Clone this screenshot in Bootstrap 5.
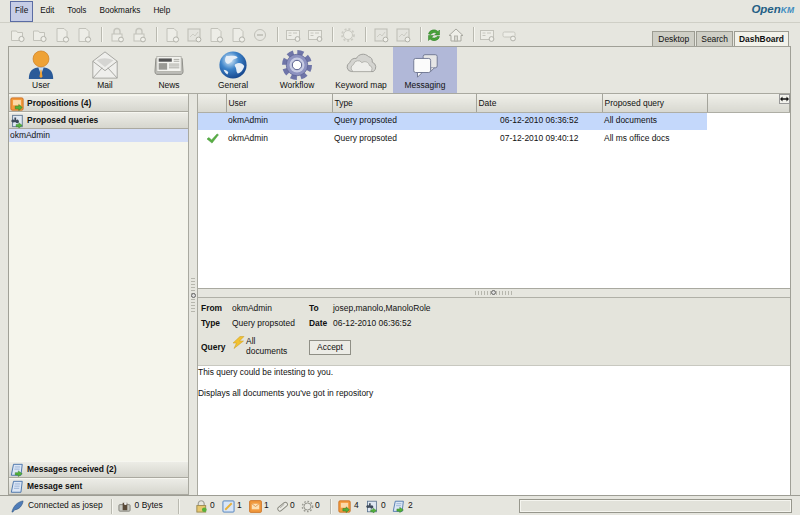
<!DOCTYPE html>
<html lang="en">
<head>
<meta charset="utf-8">
<title>OpenKM</title>
<link rel="stylesheet" href="https://cdn.jsdelivr.net/npm/bootstrap@5.3.0/dist/css/bootstrap.min.css">
<style>
html,body{height:100%;}
body{width:800px;height:515px;overflow:hidden;background:#e6e6df;font-family:"Liberation Sans",Arial,sans-serif;font-size:8.45px;color:#111;line-height:1.1;}
.okm-menu{height:23px;padding:1px 0 0 10px;border-bottom:1px solid #cfcfc6;font-size:8.2px;}
.okm-menu span{padding:0 5px;line-height:19px;margin-right:3px;}
.okm-menu .okm-file{background:#c6cde6;border:1px solid #5a6ca4;padding:0 4px;line-height:18px;margin-right:2px;}
.okm-logo{margin-left:auto;padding-right:6px;font:italic bold 11.5px "Liberation Sans",sans-serif;color:#245f85;line-height:17px;}
.okm-logo i{font-size:8.5px;color:#3d8cc0;font-style:italic;}
.okm-tools{height:23px;padding:0 0 0 10px;}
.okm-tb{width:16px;height:16px;margin-right:6px;flex:none;margin-top:4px;opacity:.85;}
.okm-tb.okm-live{opacity:1;}
.okm-sep{width:1px;height:15px;background:#b9b9b0;margin:4px 7px 0 3px;flex:none;box-shadow:1px 0 #f6f6f0;}
.okm-sep.okm-tight{margin-right:5px;}
.okm-tabs{margin-left:auto;margin-right:11px;gap:1px;align-self:flex-end;}
.okm-tab{padding:0 5px;height:15px;line-height:15px;background:#cfcfc6;border:1px solid #9c9c92;border-bottom:0;}
.okm-tab.okm-mid{padding:0 4px;}
.okm-tab.okm-on{background:#f2f2ea;font-weight:bold;padding:0 4px;}
.okm-main{margin:0 9px 0 8px;border:1px solid #a0a097;border-width:1px 1px 0 1px;flex:1 1 auto;min-height:0;}
.okm-icons{height:47px;border-bottom:1px solid #a9a9a0;}
.okm-ico{width:64px;text-align:center;padding-top:3px;flex:none;}
.okm-ico svg{display:block;margin:0 auto 1px;width:32px;height:30px;}
.okm-ico.okm-on{background:#b1b8d8;}
.okm-body{height:401px;}
.okm-left{width:180px;flex:none;background:#f5f5ec;border-right:1px solid #a9a9a0;padding-top:1px;}
.okm-acc{height:17px;background:linear-gradient(#ecece6,#d6d6ce);border-bottom:1px solid #aaa9a0;border-top:1px solid #f6f6f0;font-weight:bold;display:flex;align-items:center;gap:3px;padding-left:1px;flex:none;}
.okm-acc svg{width:14px;height:14px;flex:none;}
.okm-sel{background:#d3ddf7;height:13px;line-height:13px;padding-left:1px;}
.okm-fill{flex:1 1 auto;}
.okm-vsplit{width:8px;flex:none;display:flex;align-items:center;justify-content:center;}
.okm-dots{width:4px;height:34px;background:repeating-linear-gradient(#b6b6ad 0 1px,transparent 1px 3px);position:relative;}
.okm-knob{width:5px;height:5px;border:1px solid #666;border-radius:50%;background:#ddd;position:absolute;left:0;top:15px;}
.okm-right{flex:1 1 auto;min-width:0;border-left:1px solid #a9a9a0;}
.okm-grid{height:195px;background:#fff;position:relative;overflow:hidden;border-bottom:1px solid #a9a9a0;}
.okm-grid table{table-layout:fixed;width:100%;margin:0;font-size:8.45px;--bs-table-bg:transparent;color:#111;}
.okm-grid th{font-weight:normal;height:18px;padding:1px 0 0 2px;background:linear-gradient(#efefe9,#d8d8d0);border:0;border-right:1px solid #a4a49b;border-bottom:1px solid #aeaea5;vertical-align:middle;}
.okm-grid td{height:17.5px;padding:0 0 0 2px;border:0;vertical-align:middle;}
.okm-grid td.okm-chk{padding:0;text-align:center;line-height:0;}
.okm-grid .okm-cur td{background:#c4d8fb;}
.okm-grid .okm-cur td.okm-none{background:transparent;}
.okm-grid .okm-date{padding-left:24px;}
.okm-fit{position:absolute;right:0;top:0;width:11px;height:10px;background:#f2f2ec;border:1px solid #999;display:flex;align-items:center;justify-content:center;}
.okm-hsplit{height:8px;display:flex;align-items:center;justify-content:center;position:relative;}
.okm-hdots{width:38px;height:4px;background:repeating-linear-gradient(90deg,#b6b6ad 0 1px,transparent 1px 3px);position:relative;}
.okm-hdots .okm-knob{left:16px;top:-1px;}
.okm-detail{height:69px;border-top:1px solid #b0b0a7;border-bottom:1px solid #c8c8c0;background:#e4e4dc;padding:5px 0 0 3px;display:grid;grid-template-columns:31px 77px 24px 1fr;grid-template-rows:15px 16px 26px;align-content:start;}
.okm-detail>div{line-height:11px;}
.okm-detail>.okm-q{display:flex;align-items:flex-start;gap:1px;line-height:10px;padding-top:2px;}
.okm-q svg{width:13px;height:13px;flex:none;}
.okm-rowc{display:flex;align-items:center;}
.okm-span2{grid-column:3 / span 2;}
.okm-accept{font-size:8.45px;line-height:1;padding:0;width:42px;height:15px;border:1px solid #8f8f86;border-radius:0;background:#ecece6;color:#111;}
.okm-msg{background:#fff;flex:1 1 auto;padding:1px 0 0;min-height:0;}
.okm-msg p{margin:0 0 10px;line-height:11px;}
.okm-status{height:20px;padding:1px 0 0 11px;border-top:1px solid #9d9d94;align-items:center;flex:none;}
.okm-status svg{width:13px;height:13px;flex:none;}
.okm-sb{width:1px;height:15px;background:#b9b9b0;flex:none;box-shadow:1px 0 #f6f6f0;}
.okm-sb1{margin:0 6px 0 8px;}
.okm-sb2{margin:0 16px 0 15px;}
.okm-sb3{margin:0 7px 0 9px;}
.okm-prog{width:273px;height:14px;margin:0 8px 0 auto;border:1px solid #97978d;background:#e2e2da;box-shadow:inset 0 0 0 1px #f5f5ef;flex:none;}
.okm-n{width:7px;text-align:center;flex:none;margin:0 6px 0 1px;}
.okm-n2{width:7px;text-align:center;flex:none;margin:0 5px 0 0;}
.okm-n3{width:7px;text-align:center;flex:none;}
.okm-n4{width:7px;text-align:center;flex:none;margin:0 5px 0 2px;}
</style>
</head>
<body class="d-flex flex-column">
<svg width="0" height="0" class="position-absolute">
<defs>
<symbol id="t-doc" viewBox="0 0 16 16"><path d="M3 1.500h7l3 3v10H3z" fill="#efefe9" stroke="#bcbcb4"/><circle cx="12" cy="12.500" r="2.600" fill="#f2f2ec" stroke="#aaaaa2"/></symbol>
<symbol id="t-fold" viewBox="0 0 16 16"><path d="M1.500 4h5l1 1.500h5v8h-11z" fill="#efefe9" stroke="#bcbcb4"/><circle cx="11.500" cy="12" r="2.600" fill="#f2f2ec" stroke="#aaaaa2"/></symbol>
<symbol id="t-lock" viewBox="0 0 16 16"><path d="M5 7V4.500a3 3 0 0 1 6 0V7" fill="none" stroke="#c0c0b8" stroke-width="1.400"/><rect x="3" y="7" width="10" height="7" fill="#efefe9" stroke="#bcbcb4"/><circle cx="12" cy="12.500" r="2.400" fill="#f2f2ec" stroke="#aaaaa2"/></symbol>
<symbol id="t-card" viewBox="0 0 16 16"><rect x="1.500" y="3.500" width="13" height="9" fill="#efefe9" stroke="#bcbcb4"/><path d="M3.500 6h3M3.500 8.500h3M8 6h4" stroke="#c0c0b8"/><circle cx="12.500" cy="12" r="2.400" fill="#f2f2ec" stroke="#aaaaa2"/></symbol>
<symbol id="t-gear" viewBox="0 0 16 16"><circle cx="8" cy="8" r="4.500" fill="#ecece6" stroke="#c4c4bc"/><circle cx="8" cy="8" r="6" fill="none" stroke="#c8c8c0" stroke-width="1.800" stroke-dasharray="2 2"/></symbol>
<symbol id="t-pic" viewBox="0 0 16 16"><rect x="2" y="2" width="12" height="12" fill="#e4e4de" stroke="#b5b5ad"/><path d="M4 10l3-3 2 2 3-4" fill="none" stroke="#c9c9c1"/><circle cx="12.500" cy="12.500" r="2.400" fill="#f2f2ec" stroke="#aaaaa2"/></symbol>
<symbol id="t-round" viewBox="0 0 16 16"><circle cx="8" cy="8" r="5.500" fill="#e8e8e2" stroke="#b8b8b0"/><path d="M5 8h6" stroke="#b0b0a8" stroke-width="1.400"/></symbol>
<symbol id="t-refresh" viewBox="0 0 16 16"><path d="M2.500 7a5.500 5 0 0 1 9.500-2.500L13.500 3v5h-5l2-1.800A3.500 3 0 0 0 5 7.500z" fill="#4aa33a" stroke="#2b7a27" stroke-width=".5"/><path d="M13.500 9.500a5.500 5 0 0 1-9.500 2.500L2.500 13.500v-5h5l-2 1.800a3.500 3 0 0 0 5.500-.8z" fill="#4aa33a" stroke="#2b7a27" stroke-width=".5"/></symbol>
<symbol id="t-home" viewBox="0 0 16 16"><path d="M1 8.500L8 2l7 6.500h-2V14H3V8.500z" fill="#efefe9" stroke="#a9a9a1"/><rect x="6.500" y="9" width="3" height="5" fill="#d9d9d2" stroke="#b4b4ac"/></symbol>
<symbol id="t-key" viewBox="0 0 16 16"><rect x="2" y="5" width="12" height="5" rx="1.500" fill="#efefe9" stroke="#c2c2ba"/><circle cx="12" cy="11.500" r="2.400" fill="#f2f2ec" stroke="#aaaaa2"/></symbol>
<symbol id="i-prop" viewBox="0 0 16 16"><rect x="1" y="1" width="14" height="14" rx="1.500" fill="#f39a3c" stroke="#c96c1a"/><rect x="3.500" y="3.500" width="9" height="6" fill="#fbd9a8"/><path d="M6 10.500h4V8.500l4 3.500-4 3.500v-2H6z" fill="#53b23a" stroke="#2d7a22" stroke-width=".6"/></symbol>
<symbol id="i-query" viewBox="0 0 16 16"><rect x="3" y="1.500" width="11" height="13" fill="#dfe8f2" stroke="#58708c"/><path d="M1.500 8a2 2 0 0 1 3.500-1V4h2v3a2 2 0 1 1-.5 2.500h-2A2 2 0 0 1 1.500 8z" fill="#3c4a5a"/><path d="M7 12h3v-2l4 3-4 3v-1.500H7z" fill="#53b23a" stroke="#2d7a22" stroke-width=".5"/></symbol>
<symbol id="i-recv" viewBox="0 0 16 16"><path d="M4 1.500h10l-1.500 12.500H1.500z" fill="#dbe6f5" stroke="#3f6ba6"/><path d="M5.500 4.500h6M5 7h6" stroke="#7f9fcb" stroke-width=".8"/><path d="M6 11h3.500V9l4.500 3.300L9.500 15.500v-1.800H6z" fill="#53b23a" stroke="#2d7a22" stroke-width=".5"/></symbol>
<symbol id="i-sent" viewBox="0 0 16 16"><path d="M4 1.500h10l-1.500 12.500H1.500z" fill="#dbe6f5" stroke="#3f6ba6"/><path d="M5.500 4.500h6M5 7h6M4.500 9.500h6" stroke="#7f9fcb" stroke-width=".8"/></symbol>
<symbol id="s-quill" viewBox="0 0 14 14"><path d="M1 13C2 8 6 2 13 1c-.5 5-4.500 9.500-9 9.500L2 13z" fill="#4f7cb8" stroke="#2c527f" stroke-width=".6"/></symbol>
<symbol id="s-disk" viewBox="0 0 14 14"><rect x="1" y="5" width="12" height="7" rx="1" fill="#c9c9c2" stroke="#7f7f78"/><rect x="5" y="3" width="5" height="8" fill="#5a4a38"/><circle cx="8" cy="4" r="1.500" fill="#eee"/></symbol>
<symbol id="s-lock" viewBox="0 0 14 14"><path d="M3.500 6V4a3.200 3.200 0 0 1 6.400 0v2" fill="none" stroke="#a0a098" stroke-width="1.300"/><rect x="2" y="6" width="9.500" height="7" fill="#e8c76e" stroke="#9a8a50"/><circle cx="10" cy="10.500" r="2.500" fill="#58b03a"/></symbol>
<symbol id="s-edit" viewBox="0 0 14 14"><rect x="1" y="1" width="12" height="12" rx="1" fill="#d9e6f7" stroke="#4d7fbd"/><path d="M3.500 10.500l7-7" stroke="#e8b13a" stroke-width="2"/></symbol>
<symbol id="s-mail" viewBox="0 0 14 14"><rect x=".7" y=".7" width="12.600" height="12.600" rx="1" fill="#f29a3e" stroke="#cc7020"/><rect x="3" y="4" width="8" height="6" fill="#fde0b4"/><path d="M3 4l4 3 4-3" fill="none" stroke="#d27a28" stroke-width=".7"/></symbol>
<symbol id="s-clip" viewBox="0 0 14 14"><rect x="1" y="5" width="12" height="4.500" rx="2" transform="rotate(-40 7 7)" fill="#ececE6" stroke="#88887f"/><path d="M4.500 8.500l4.500-4" stroke="#a2a29a"/></symbol>
<symbol id="s-gear" viewBox="0 0 14 14"><circle cx="7" cy="7" r="3.800" fill="#e8e8e2" stroke="#8f8f87"/><circle cx="7" cy="7" r="5.500" fill="none" stroke="#9a9a92" stroke-width="1.600" stroke-dasharray="1.800 1.800"/></symbol>
<symbol id="a-user" viewBox="0 0 32 32"><path d="M3 31c0-8 3.500-12.500 13-12.500S29 23 29 31z" fill="#2a5a98"/><path d="M13 18.500h6L16 26z" fill="#c8dcf0"/><path d="M15.500 21h1l1 7-1.500 2-1.500-2z" fill="#eca035"/><circle cx="16" cy="9.500" r="8.500" fill="#eea236" stroke="#c9791c" stroke-width=".7"/></symbol>
<symbol id="a-mail" viewBox="0 0 32 32"><path d="M3 12L16 2l13 10v18H3z" fill="#efefec" stroke="#a3a39e"/><path d="M7 11c5-3 12-3 18 0l-9 7z" fill="#d5d5d2"/><path d="M3 12l13 10 13-10M3 30l10-11M29 30L19 19" fill="none" stroke="#a3a39e"/></symbol>
<symbol id="a-news" viewBox="0 0 32 32"><path d="M2 9h28l1 14a3 3 0 0 1-2 3H3a3 3 0 0 1-2-3z" fill="#bdbdb8" stroke="#8b8b85"/><rect x="3" y="7" width="26" height="16" fill="#f4f4f0" stroke="#b3b3ad"/><rect x="5" y="9" width="14" height="3.500" fill="#555"/><rect x="5" y="14" width="9" height="7" fill="#9a9a95"/><path d="M16 15h11M16 17h11M16 19h11M21 10h6M21 12h6" stroke="#a6a6a0"/></symbol>
<symbol id="a-globe" viewBox="0 0 32 32"><radialGradient id="gl" cx=".38" cy=".32" r=".75"><stop offset="0" stop-color="#dff0fb"/><stop offset=".45" stop-color="#3d83c9"/><stop offset="1" stop-color="#123f86"/></radialGradient><circle cx="16" cy="16" r="14.500" fill="url(#gl)"/><path d="M9 6c4 1 9-1 12 2-2 2-5 1-6 4-2 1-3 4-6 2-2-2-2-5 0-8zM19 15c3-2 7-1 9 2-1 4-4 8-7 8-2-2-1-4-2-6s-2-3 0-4zM6 21c2 0 4 1 5 3l-1 2c-2-1-3-3-4-5z" fill="#e6eef7"/></symbol>
<symbol id="a-gear" viewBox="0 0 32 32"><circle cx="16" cy="16" r="13" fill="none" stroke="#6f75a8" stroke-width="6" stroke-dasharray="6.200 4"/><circle cx="16" cy="16" r="11.500" fill="#8d92c0" stroke="#565c90" stroke-width=".7"/><circle cx="16" cy="16" r="8" fill="#c7cbe3"/><circle cx="16" cy="16" r="5" fill="#fff" stroke="#4f5688"/></symbol>
<symbol id="a-cloud" viewBox="0 0 32 32"><path d="M6 23a5 5 0 0 1-2-9.500 6 6 0 0 1 7-4.500 8 8 0 0 1 13-2 5.500 5.500 0 0 1 4 6 5.500 5.500 0 0 1 1 10z" fill="#d4d4d0" stroke="#9b9b96"/><path d="M8 23a4 4 0 0 1 0-7.500 5 5 0 0 1 9-2 5 5 0 0 1 8 3 3.500 3.500 0 0 1 1 6.500z" fill="#eeeeea" stroke="#b1b1ac"/></symbol>
<symbol id="a-msg" viewBox="0 0 32 32"><rect x="14" y="5" width="15" height="14" rx="2" fill="#e6e6e6" stroke="#6f7691"/><path d="M22 19v4l4-4" fill="#e6e6e6" stroke="#6f7691"/><rect x="4" y="9" width="18" height="15" rx="2" fill="#fbfbfb" stroke="#6f7691"/><path d="M8 24v5l5-5z" fill="#fbfbfb" stroke="#6f7691"/></symbol>
</defs>
</svg>

<div class="okm-menu d-flex flex-shrink-0">
  <span class="okm-file">File</span><span>Edit</span><span>Tools</span><span>Bookmarks</span><span>Help</span>
  <div class="okm-logo">Open<i>KM</i></div>
</div>

<div class="okm-tools d-flex flex-shrink-0">
  <svg class="okm-tb"><use href="#t-fold"/></svg><svg class="okm-tb"><use href="#t-fold"/></svg><svg class="okm-tb"><use href="#t-doc"/></svg><svg class="okm-tb"><use href="#t-doc"/></svg><div class="okm-sep"></div>
  <svg class="okm-tb"><use href="#t-lock"/></svg><svg class="okm-tb"><use href="#t-lock"/></svg><div class="okm-sep"></div>
  <svg class="okm-tb"><use href="#t-doc"/></svg><svg class="okm-tb"><use href="#t-pic"/></svg><svg class="okm-tb"><use href="#t-doc"/></svg><svg class="okm-tb"><use href="#t-doc"/></svg><svg class="okm-tb"><use href="#t-round"/></svg><div class="okm-sep"></div>
  <svg class="okm-tb"><use href="#t-card"/></svg><svg class="okm-tb"><use href="#t-card"/></svg><div class="okm-sep"></div>
  <svg class="okm-tb"><use href="#t-gear"/></svg><div class="okm-sep"></div>
  <svg class="okm-tb"><use href="#t-pic"/></svg><svg class="okm-tb"><use href="#t-pic"/></svg><div class="okm-sep okm-tight"></div>
  <svg class="okm-tb okm-live"><use href="#t-refresh"/></svg><svg class="okm-tb okm-live"><use href="#t-home"/></svg><div class="okm-sep okm-tight"></div>
  <svg class="okm-tb"><use href="#t-card"/></svg><svg class="okm-tb"><use href="#t-key"/></svg>
  <div class="okm-tabs d-flex">
    <div class="okm-tab">Desktop</div><div class="okm-tab okm-mid">Search</div><div class="okm-tab okm-on">DashBoard</div>
  </div>
</div>

<div class="okm-main d-flex flex-column">
  <div class="okm-icons d-flex flex-shrink-0">
    <div class="okm-ico"><svg><use href="#a-user"/></svg>User</div>
    <div class="okm-ico"><svg><use href="#a-mail"/></svg>Mail</div>
    <div class="okm-ico"><svg><use href="#a-news"/></svg>News</div>
    <div class="okm-ico"><svg><use href="#a-globe"/></svg>General</div>
    <div class="okm-ico"><svg><use href="#a-gear"/></svg>Workflow</div>
    <div class="okm-ico"><svg><use href="#a-cloud"/></svg>Keyword map</div>
    <div class="okm-ico okm-on"><svg><use href="#a-msg"/></svg>Messaging</div>
  </div>
  <div class="okm-body d-flex flex-shrink-0">
    <div class="okm-left d-flex flex-column">
      <div class="okm-acc"><svg><use href="#i-prop"/></svg>Propositions (4)</div>
      <div class="okm-acc"><svg><use href="#i-query"/></svg>Proposed queries</div>
      <div class="okm-sel">okmAdmin</div>
      <div class="okm-fill"></div>
      <div class="okm-acc"><svg><use href="#i-recv"/></svg>Messages received (2)</div>
      <div class="okm-acc"><svg><use href="#i-sent"/></svg>Message sent</div>
    </div>
    <div class="okm-vsplit"><div class="okm-dots"><div class="okm-knob"></div></div></div>
    <div class="okm-right d-flex flex-column">
      <div class="okm-grid flex-shrink-0">
        <table class="table">
          <colgroup><col style="width:28px"><col style="width:106px"><col style="width:144px"><col style="width:126px"><col style="width:105px"><col></colgroup>
          <thead><tr><th></th><th>User</th><th>Type</th><th>Date</th><th>Proposed query</th><th></th></tr></thead>
          <tbody>
            <tr class="okm-cur"><td></td><td>okmAdmin</td><td>Query propsoted</td><td class="okm-date">06-12-2010 06:36:52</td><td>All documents</td><td class="okm-none"></td></tr>
            <tr><td class="okm-chk"><svg width="13" height="11" viewBox="0 0 14 12"><path d="M1 6.500l2-1.500 3 2.500L12 1l1.500 1L6.500 11z" fill="#58b043" stroke="#3a8a2c" stroke-width=".5"/></svg></td><td>okmAdmin</td><td>Query propsoted</td><td class="okm-date">07-12-2010 09:40:12</td><td>All ms office docs</td><td></td></tr>
          </tbody>
        </table>
        <div class="okm-fit"><svg width="9" height="6" viewBox="0 0 9 6"><path d="M0 3l2.500-2.500V2.300h4V.5L9 3 6.500 5.500V3.700h-4v1.800z" fill="#111"/></svg></div>
      </div>
      <div class="okm-hsplit flex-shrink-0"><div class="okm-hdots"><div class="okm-knob"></div></div></div>
      <div class="okm-detail flex-shrink-0">
        <div class="fw-bold">From</div><div>okmAdmin</div><div class="fw-bold">To</div><div>josep,manolo,ManoloRole</div>
        <div class="fw-bold">Type</div><div>Query propsoted</div><div class="fw-bold">Date</div><div>06-12-2010 06:36:52</div>
        <div class="okm-rowc fw-bold">Query</div>
        <div class="okm-q"><svg viewBox="0 0 13 13"><path d="M8 .5L1 7h3.500L2 12.500 11.500 5H7.500L12 .5z" fill="#f2c230" stroke="#c89a20" stroke-width=".5"/></svg><span>All<br>documents</span></div>
        <div class="okm-rowc okm-span2"><button type="button" class="btn okm-accept">Accept</button></div>
      </div>
      <div class="okm-msg">
        <p>This query could be intesting to you.</p>
        <p>Displays all documents you've got in repository</p>
      </div>
    </div>
  </div>
</div>

<div class="okm-status d-flex">
  <svg><use href="#s-quill"/></svg><span class="ms-1">Connected as josep</span><div class="okm-sb okm-sb1"></div>
  <svg><use href="#s-disk"/></svg><span class="ms-1">0 Bytes</span><div class="okm-sb okm-sb2"></div>
  <svg><use href="#s-lock"/></svg><span class="okm-n">0</span>
  <svg><use href="#s-edit"/></svg><span class="okm-n">1</span>
  <svg><use href="#s-mail"/></svg><span class="okm-n">1</span>
  <svg><use href="#s-clip"/></svg><span class="okm-n2">0</span>
  <svg><use href="#s-gear"/></svg><span class="okm-n3">0</span><div class="okm-sb okm-sb3"></div>
  <svg><use href="#i-prop"/></svg><span class="okm-n4">4</span>
  <svg><use href="#i-query"/></svg><span class="okm-n4">0</span>
  <svg><use href="#i-recv"/></svg><span class="okm-n4">2</span>
  <div class="okm-prog"></div>
</div>
</body>
</html>
